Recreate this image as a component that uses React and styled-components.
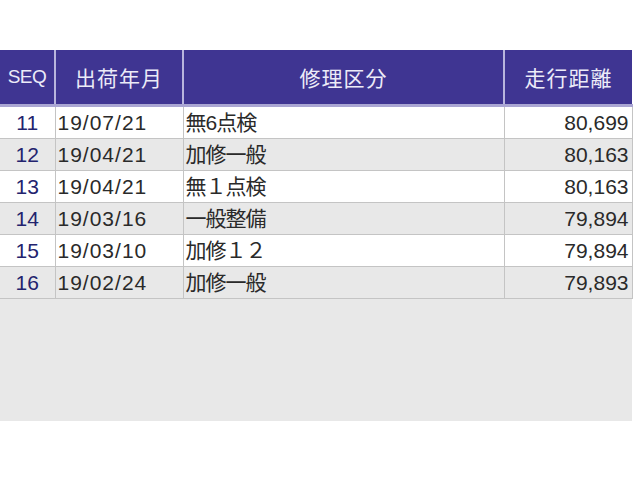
import React from 'react'
import styled, { createGlobalStyle } from 'styled-components'

const rows = [
  { seq: 11, date: '19/07/21', kind: '無6点検', km: '80,699' },
  { seq: 12, date: '19/04/21', kind: '加修一般', km: '80,163' },
  { seq: 13, date: '19/04/21', kind: '無１点検', km: '80,163' },
  { seq: 14, date: '19/03/16', kind: '一般整備', km: '79,894' },
  { seq: 15, date: '19/03/10', kind: '加修１２', km: '79,894' },
  { seq: 16, date: '19/02/24', kind: '加修一般', km: '79,893' },
]

export default function App() {
  return (
    <>
      <GlobalStyle />
      <Page>
        <Panel>
          <Table>
            <colgroup>
              <col style={{ width: 55 }} />
              <col style={{ width: 128 }} />
              <col style={{ width: 321 }} />
              <col style={{ width: 128 }} />
            </colgroup>
            <thead>
              <tr>
                <HeadCell $small>SEQ</HeadCell>
                <HeadCell>出荷年月</HeadCell>
                <HeadCell>修理区分</HeadCell>
                <HeadCell $last>走行距離</HeadCell>
              </tr>
            </thead>
            <tbody>
              {rows.map((r, i) => (
                <Row key={r.seq} $alt={i % 2 === 1}>
                  <SeqCell>{r.seq}</SeqCell>
                  <DateCell>{r.date}</DateCell>
                  <KindCell>{r.kind}</KindCell>
                  <Cell $right>{r.km}</Cell>
                </Row>
              ))}
            </tbody>
          </Table>
        </Panel>
      </Page>
    </>
  )
}

// ==================== STYLED COMPONENTS ====================
const GlobalStyle = createGlobalStyle`
  html, body {
    margin: 0;
    padding: 0;
    background: #ffffff;
  }
  body {
    font-family: "Liberation Sans", "Noto Sans CJK JP", sans-serif;
  }
`
const Page = styled.div`
  width: 640px;
  height: 480px;
  padding-top: 50px;
  box-sizing: border-box;
`
const Panel = styled.div`
  width: 632px;
  height: 371px;
  background: #e8e8e8;
`
const Table = styled.table`
  width: 632px;
  table-layout: fixed;
  border-collapse: collapse;
  border-spacing: 0;
`
const HeadCell = styled.th`
  height: 54px;
  padding: 0;
  background: #3f3592;
  color: #ecebf8;
  font-family: ${({ $small }) => ($small ? '"Liberation Sans"' : '"Noto Sans CJK JP"')}, sans-serif;
  font-weight: 400;
  font-size: ${({ $small }) => ($small ? '19px' : '21px')};
  letter-spacing: ${({ $small }) => ($small ? '-0.5px' : '1px')};
  text-align: center;
  border-right: ${({ $last }) => ($last ? 'none' : '2px solid #b9b5dd')};
  border-bottom: 3px solid #aaa6d3;
`
const Row = styled.tr`
  background: ${({ $alt }) => ($alt ? '#e8e8e8' : '#ffffff')};
`
const Cell = styled.td`
  height: 31px;
  padding: 0 ${({ $right }) => ($right ? '3px' : '0')} 0 ${({ $right }) => ($right ? '0' : '2px')};
  font-size: 21px;
  color: #2a2a2a;
  text-align: ${({ $right }) => ($right ? 'right' : 'left')};
  white-space: nowrap;
  border-right: 1px solid #c4c4c4;
  border-bottom: 1px solid #c4c4c4;
  line-height: 1;
`
const DateCell = styled(Cell)`
  letter-spacing: 1px;
`
const KindCell = styled(Cell)`
  letter-spacing: -1px;
`
const SeqCell = styled(Cell)`
  text-align: center;
  color: #23236e;
  padding: 0;
`
